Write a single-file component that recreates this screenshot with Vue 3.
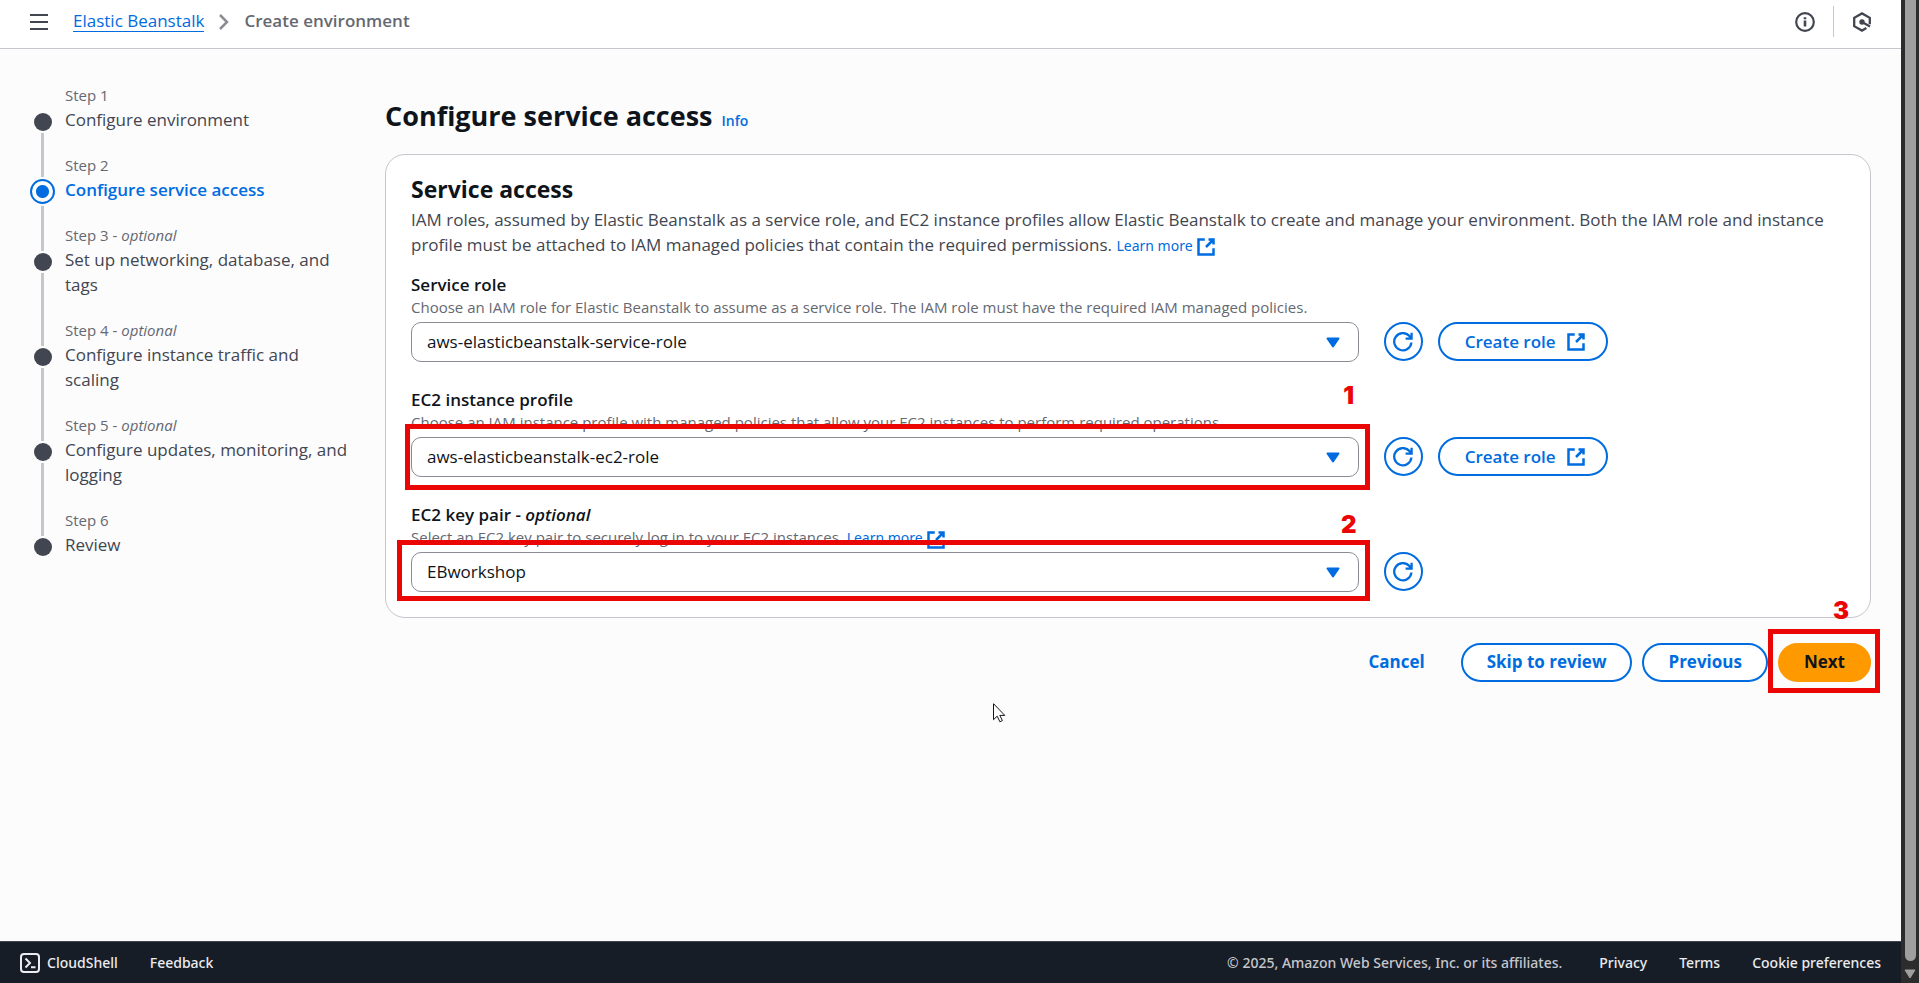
<script setup>
import { ref, reactive } from 'vue'

const steps = [
  { n: 1, title: 'Configure environment' },
  { n: 2, title: 'Configure service access', active: true },
  { n: 3, title: 'Set up networking, database, and tags', optional: true },
  { n: 4, title: 'Configure instance traffic and scaling', optional: true },
  { n: 5, title: 'Configure updates, monitoring, and logging', optional: true },
  { n: 6, title: 'Review' }
]

const fields = reactive([
  {
    id: 'service-role',
    label: 'Service role',
    hint: 'Choose an IAM role for Elastic Beanstalk to assume as a service role. The IAM role must have the required IAM managed policies.',
    value: 'aws-elasticbeanstalk-service-role',
    create: true
  },
  {
    id: 'instance-profile',
    label: 'EC2 instance profile',
    hint: 'Choose an IAM instance profile with managed policies that allow your EC2 instances to perform required operations.',
    value: 'aws-elasticbeanstalk-ec2-role',
    create: true,
    mark: 1
  },
  {
    id: 'key-pair',
    label: 'EC2 key pair',
    optional: true,
    hint: 'Select an EC2 key pair to securely log in to your EC2 instances.',
    learn: true,
    value: 'EBworkshop',
    mark: 2
  }
])

const pointer = ref(true)
</script>

<template>
  <div class="shell">
    <div class="page">
      <header class="topbar">
        <button class="icon-btn" aria-label="Open navigation">
          <svg width="18" height="16" viewBox="0 0 18 16"><path d="M0 1h18M0 8h18M0 15h18" stroke="#424650" stroke-width="2" /></svg>
        </button>
        <nav class="crumbs" aria-label="Breadcrumbs">
          <a href="#" class="crumb-link">Elastic Beanstalk</a>
          <svg width="10" height="18" viewBox="0 0 10 18" fill="none"><path d="M1 2l7 7-7 7" stroke="#8c8c94" stroke-width="2.5" /></svg>
          <span class="crumb-now">Create environment</span>
        </nav>
        <div class="tools">
          <button class="icon-btn" aria-label="Info panel">
            <svg width="20" height="20" viewBox="0 0 20 20" fill="none" stroke="#424650" stroke-width="2.2">
              <circle cx="10" cy="10" r="8.8" />
              <path d="M10 5.2v2M10 8.6v6" stroke-width="2.6" />
            </svg>
          </button>
          <span class="rule"></span>
          <button class="icon-btn" aria-label="Assistant">
            <svg width="20" height="20" viewBox="0 0 20 20" fill="none" stroke="#424650">
              <path d="M17.8 12.2V5.8L10 1.4 2.2 5.8v8.4l7.8 4.4 4.4-2.5" stroke-width="2.3" />
              <path d="M10 10l8 4.4" stroke-width="2.3" />
              <circle cx="10" cy="10" r="2.7" fill="#424650" stroke="none" />
            </svg>
          </button>
        </div>
      </header>

      <div class="body">
        <nav class="steps" aria-label="Steps">
          <ol>
            <li v-for="s in steps" :key="s.n" :class="{ active: s.active }">
              <span class="rail"><i class="line before"></i><i class="dot"></i><i class="line after"></i></span>
              <div class="step-text">
                <span class="step-no">Step {{ s.n }}<template v-if="s.optional"> - <em>optional</em></template></span>
                <a href="#" class="step-title">{{ s.title }}</a>
              </div>
            </li>
          </ol>
        </nav>

        <main>
          <h1>Configure service access <a href="#" class="info">Info</a></h1>

          <section class="card">
            <h2>Service access</h2>
            <p class="desc">
              IAM roles, assumed by Elastic Beanstalk as a service role, and EC2 instance profiles allow Elastic Beanstalk to create and manage your environment. Both the IAM role and instance profile must be attached to IAM managed policies that contain the required permissions.
              <a href="#" class="learn">Learn more <svg class="ext" width="20" height="20" viewBox="0 0 16 16"><path d="M10 2h4v4M8 8l6-6M14 9v5H2V2h5" /></svg></a>
            </p>

            <div v-for="f in fields" :key="f.id" class="field">
              <label :for="f.id">{{ f.label }}<template v-if="f.optional"> - <em>optional</em></template></label>
              <p class="hint">
                {{ f.hint }}
                <a v-if="f.learn" href="#" class="learn">Learn more <svg class="ext" width="20" height="20" viewBox="0 0 16 16"><path d="M10 2h4v4M8 8l6-6M14 9v5H2V2h5" /></svg></a>
              </p>
              <div class="row">
                <div class="picker">
                  <select :id="f.id" v-model="f.value"><option>{{ f.value }}</option></select>
                  <svg class="caret" width="14" height="11" viewBox="0 0 14 11"><path d="M1.5 1.5h11L7 9.5z" fill="#006ce0" stroke="#006ce0" stroke-width="2" stroke-linejoin="round" /></svg>
                  <span v-if="f.mark" class="mark" :class="'mark-' + f.mark"><b>{{ f.mark }}</b></span>
                </div>
                <div class="actions">
                  <button class="btn round" :aria-label="'Refresh ' + f.label">
                    <svg class="refresh" width="20" height="20" viewBox="0 0 20 20"><path d="M18.4 10.500a8.600 8.600 0 1 1-2-6.400L18 6.200M18.600 .8v5.800h-6" /></svg>
                  </button>
                  <button v-if="f.create" class="btn create">Create role <svg class="ext" width="20" height="20" viewBox="0 0 16 16"><path d="M10 2h4v4M8 8l6-6M14 9v5H2V2h5" /></svg></button>
                </div>
              </div>
            </div>
          </section>

          <div class="form-actions">
            <button class="btn plain">Cancel</button>
            <button class="btn">Skip to review</button>
            <button class="btn">Previous</button>
            <span class="next-wrap">
              <button class="btn primary">Next</button>
              <span class="mark mark-3"><b>3</b></span>
            </span>
          </div>
        </main>
      </div>

      <footer class="bottom">
        <button class="shell-btn">
          <svg width="20" height="20" viewBox="0 0 20 20" fill="none" stroke="#ebebf0" stroke-width="2"><rect x="1" y="1" width="18" height="18" rx="3" /><path d="M5.5 5.5L10 10l-4.500 4.500M11 14.200h4.500" /></svg>
          CloudShell
        </button>
        <a href="#">Feedback</a>
        <span class="copy">© 2025, Amazon Web Services, Inc. or its affiliates.</span>
        <a href="#">Privacy</a>
        <a href="#">Terms</a>
        <a href="#">Cookie preferences</a>
      </footer>
    </div>

    <div class="scroll" aria-hidden="true">
      <span class="thumb"></span>
      <svg width="12" height="10" viewBox="0 0 12 10"><path d="M1 1h10L6 9z" fill="#9f9f9f" stroke="#9f9f9f" stroke-linejoin="round" /></svg>
    </div>

    <svg v-if="pointer" class="cursor" width="13" height="20" viewBox="0 0 13 20"><path d="M.5.7v16l3.700-3.500 2.700 5.600 2.500-1.200-2.600-5.200h5z" fill="#fff" stroke="#14141f" /></svg>
  </div>
</template>

<style>
html,
body {
  margin: 0;
  background: #fcfcfd;
}
</style>

<style scoped>
* {
  box-sizing: border-box;
}
.shell {
  position: relative;
  display: grid;
  grid-template-columns: minmax(0, 1fr) 18px;
  min-height: 100vh;
  font: 17px/25px "Open Sans", "Noto Sans", sans-serif;
  color: #0f141a;
}
.page {
  display: flex;
  flex-direction: column;
}
a {
  color: #006ce0;
  text-decoration: none;
}
button {
  font: inherit;
  cursor: pointer;
}
h1,
h2,
p,
ol {
  margin: 0;
  padding: 0;
}
svg {
  display: block;
}

.topbar {
  display: flex;
  align-items: center;
  height: 49px;
  padding: 0 29px 5px 30px;
  background: #fff;
  border-bottom: 1px solid #c6c6cd;
}
.icon-btn {
  padding: 0;
  border: 0;
  background: none;
}
.crumbs {
  display: flex;
  align-items: center;
  gap: 15px;
  margin-left: 25px;
}
.crumb-link {
  line-height: 20px;
  border-bottom: 1px solid #006ce0;
}
.crumb-now {
  line-height: 20px;
  padding-bottom: 1px;
  font-weight: 600;
  color: #656871;
}
.tools {
  display: flex;
  align-items: center;
  gap: 18px;
  margin-left: auto;
}
.rule {
  width: 1px;
  height: 31px;
  background: #c6c6cd;
}

.body {
  flex: 1;
  display: grid;
  grid-template-columns: 320px minmax(0, 1fr);
  gap: 35px;
  padding: 36px 30px 25px;
}
.steps ol {
  list-style: none;
}
.steps li {
  display: flex;
  gap: 10px;
}
.rail {
  display: flex;
  flex-direction: column;
  align-items: center;
  width: 25px;
}
.line {
  width: 3px;
  background: #c6c6cd;
}
.line.before {
  height: 26px;
}
.line.after {
  flex: 1;
}
.dot {
  width: 18px;
  height: 18px;
  margin: 2px 0;
  border-radius: 50%;
  background: #424650;
}
li:first-child .before,
li:last-child .after {
  background: none;
}
.active .before {
  height: 22px;
}
.active .dot {
  width: 25px;
  height: 25px;
  margin: 2px 0;
  border: 2px solid #006ce0;
  background: radial-gradient(circle, #006ce0 6px, #fcfcfd 7px);
}
.step-text {
  flex: 1;
  padding-bottom: 23px;
}
.step-no {
  display: block;
  margin-bottom: 2px;
  font-size: 15px;
  line-height: 20px;
  color: #656871;
}
.step-title {
  display: block;
  color: #424650;
}
.active .step-title {
  font-weight: 600;
  color: #006ce0;
}

main {
  padding-top: 13px;
}
h1 {
  font-size: 27px;
  line-height: 36px;
  margin-bottom: 20px;
}
.info {
  margin-left: 2px;
  font-size: 14px;
  line-height: 1;
  font-weight: 600;
}
.card {
  padding: 19px 25px 25px;
  border: 1px solid #c6c6cd;
  border-radius: 20px;
  background: #fff;
}
h2 {
  font-size: 23px;
  line-height: 30px;
  margin-bottom: 3px;
}
.desc {
  color: #424650;
}
.learn {
  font-family: "Noto Sans", sans-serif;
  font-size: 14px;
  line-height: 1;
}
.ext {
  display: inline-block;
  vertical-align: middle;
  fill: none;
  stroke: #006ce0;
  stroke-width: 2;
}
.field {
  margin-top: 25px;
}
.desc + .field {
  margin-top: 15px;
}
.field label {
  display: block;
  font-weight: 600;
}
.hint {
  height: 20px;
  font-size: 15px;
  line-height: 20px;
  color: #656871;
}
.row {
  display: grid;
  grid-template-columns: repeat(12, minmax(0, 1fr));
  column-gap: 25px;
  margin-top: 5px;
}
.picker {
  position: relative;
  grid-column: span 8;
}
select {
  display: block;
  width: 100%;
  height: 40px;
  padding: 0 45px 2px 15px;
  border: 1px solid #8c8c94;
  border-radius: 10px;
  appearance: none;
  background: #fff;
  font: inherit;
  color: #0f141a;
}
.caret {
  position: absolute;
  right: 19px;
  top: 15px;
  pointer-events: none;
}
.actions {
  grid-column: span 4;
  display: flex;
  gap: 15px;
}
.btn {
  height: 39px;
  padding: 0 25px;
  border: 2px solid #006ce0;
  border-radius: 20px;
  background: #fff;
  font-weight: 600;
  color: #006ce0;
}
.round {
  display: grid;
  place-items: center;
  width: 39px;
  padding: 0;
}
.refresh {
  fill: none;
  stroke: #006ce0;
  stroke-width: 2.3;
}
.create {
  display: flex;
  align-items: center;
  gap: 10px;
  padding-right: 20px;
}
.form-actions {
  display: flex;
  justify-content: flex-end;
  gap: 10px;
  margin-top: 25px;
}
.form-actions .btn {
  padding: 0 24px 2px;
  font-weight: 700;
}
.form-actions .plain {
  border-color: transparent;
  background: none;
}
.next-wrap {
  position: relative;
}
.form-actions .primary {
  border-color: #ff9900;
  background: #ff9900;
  color: #0f141a;
}

.mark {
  position: absolute;
  border: 5px solid #eb0606;
  pointer-events: none;
}
.mark b {
  position: absolute;
  right: 8px;
  bottom: 100%;
  width: 16px;
  text-align: center;
  font: 900 24px/24px Inter, sans-serif;
  color: #eb0606;
}
.mark-1 {
  inset: -13px -11px -13px -6px;
}
.mark-1 b {
  margin-bottom: 21px;
}
.mark-2 {
  inset: -12px -11px -9px -14px;
}
.mark-2 b {
  margin-bottom: 8px;
}
.mark-3 {
  inset: -14px -9px -11px -10px;
}
.mark-3 b {
  right: 26px;
  margin-bottom: 11px;
}

.bottom {
  display: flex;
  align-items: center;
  gap: 32px;
  height: 42px;
  padding: 0 20px;
  border-top: 1px solid #424650;
  background: #161d26;
  font-family: "Noto Sans", sans-serif;
  font-size: 14px;
  font-weight: 500;
  color: #ebebf0;
}
.bottom a {
  color: #ebebf0;
}
.shell-btn {
  display: flex;
  align-items: center;
  gap: 7px;
  padding: 0;
  border: 0;
  background: none;
  color: inherit;
}
.copy {
  margin-left: auto;
  margin-right: 5px;
  color: #c6c6cd;
}

.scroll {
  display: flex;
  flex-direction: column;
  align-items: center;
  gap: 8px;
  padding-bottom: 4px;
  background: #2c2c2c;
}
.thumb {
  flex: 1;
  width: 11px;
  border-radius: 0 0 6px 6px;
  background: #9f9f9f;
}
.cursor {
  position: absolute;
  left: 993px;
  top: 703px;
}
</style>
